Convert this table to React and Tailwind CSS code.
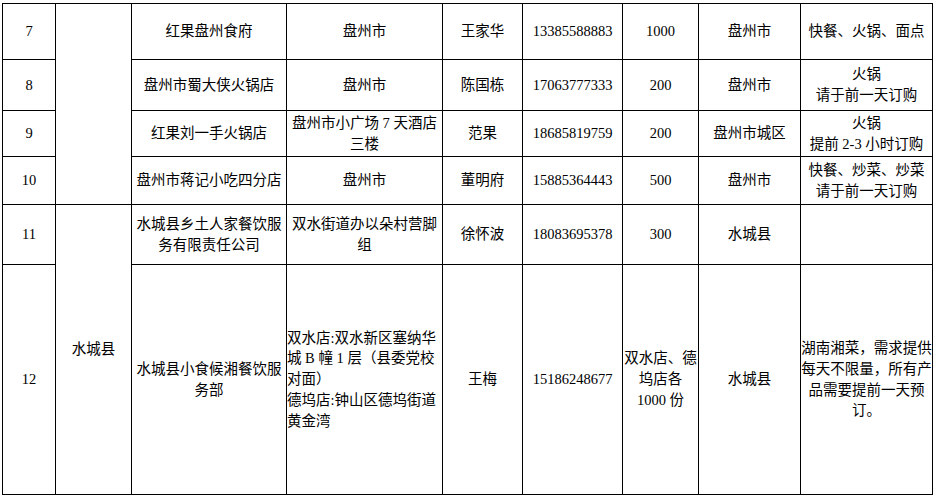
import React from "react";

const C = ({ children, className = "" }) => (
  <div className={`bg-white flex items-center justify-center text-center ${className}`}>
    <div>{children}</div>
  </div>
);

export default function App() {
  return (
    <div
      className="w-[937px] h-[498px] bg-white text-black text-[14.5px] leading-[20.7px] pt-[3px] pl-[2px]"
      style={{ fontFamily: '"Liberation Serif", "Noto Sans CJK SC", serif' }}
    >
      <div className="grid w-fit bg-black p-px gap-px grid-cols-[52px_75px_154px_155px_79px_99px_75px_101px_131px] grid-rows-[55px_50px_45px_47px_59px_229px]">
        {/* row 7 */}
        <C>7</C>
        <div className="bg-white row-span-4" />
        <C>红果盘州食府</C>
        <C>盘州市</C>
        <C>王家华</C>
        <C>13385588883</C>
        <C>1000</C>
        <C>盘州市</C>
        <C>快餐、火锅、面点</C>
        {/* row 8 */}
        <C>8</C>
        <C>盘州市蜀大侠火锅店</C>
        <C>盘州市</C>
        <C>陈国栋</C>
        <C>17063777333</C>
        <C>200</C>
        <C>盘州市</C>
        <C>
          火锅
          <br />
          请于前一天订购
        </C>
        {/* row 9 */}
        <C>9</C>
        <C>红果刘一手火锅店</C>
        <C className="whitespace-nowrap">
          盘州市小广场 7 天酒店
          <br />
          三楼
        </C>
        <C>范果</C>
        <C>18685819759</C>
        <C>200</C>
        <C>盘州市城区</C>
        <C className="whitespace-nowrap">
          火锅
          <br />
          提前 2-3 小时订购
        </C>
        {/* row 10 */}
        <C>10</C>
        <C>盘州市蒋记小吃四分店</C>
        <C>盘州市</C>
        <C>董明府</C>
        <C>15885364443</C>
        <C>500</C>
        <C>盘州市</C>
        <C className="whitespace-nowrap">
          快餐、炒菜、炒菜
          <br />
          请于前一天订购
        </C>
        {/* row 11 */}
        <C>11</C>
        <C className="row-span-2">水城县</C>
        <C className="whitespace-nowrap">
          水城县乡土人家餐饮服
          <br />
          务有限责任公司
        </C>
        <C className="whitespace-nowrap">
          双水街道办以朵村营脚
          <br />
          组
        </C>
        <C>徐怀波</C>
        <C>18083695378</C>
        <C>300</C>
        <C>水城县</C>
        <div className="bg-white" />
        {/* row 12 */}
        <C>12</C>
        <C className="whitespace-nowrap">
          水城县小食候湘餐饮服
          <br />
          务部
        </C>
        <div className="bg-white flex items-center justify-start text-left whitespace-nowrap">
          <div>
            双水店:双水新区塞纳华
            <br />
            城 B 幢 1 层（县委党校
            <br />
            对面）
            <br />
            德坞店:钟山区德坞街道
            <br />
            黄金湾
          </div>
        </div>
        <C>王梅</C>
        <C>15186248677</C>
        <C className="whitespace-nowrap">
          双水店、德
          <br />
          坞店各
          <br />
          1000 份
        </C>
        <C>水城县</C>
        <C className="whitespace-nowrap">
          湖南湘菜，需求提供
          <br />
          每天不限量，所有产
          <br />
          品需要提前一天预
          <br />
          订。
        </C>
      </div>
    </div>
  );
}
